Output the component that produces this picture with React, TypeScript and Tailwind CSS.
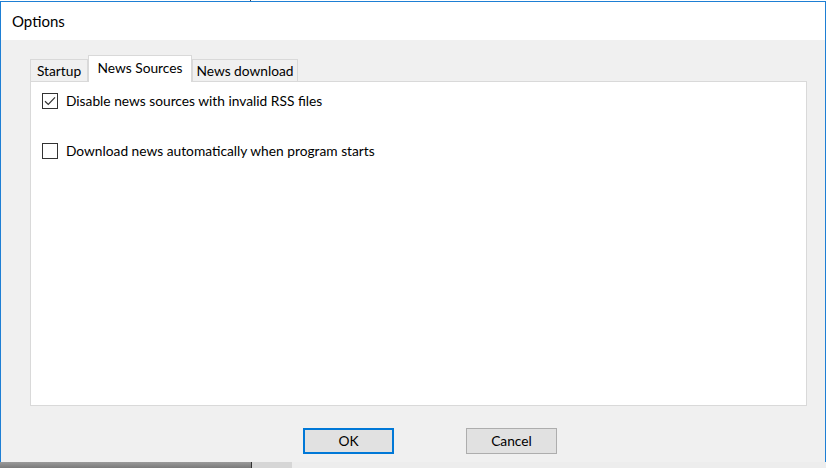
import { useState } from 'react';

const tabs = [
  { name: 'Startup', width: 'w-[58px]' },
  { name: 'News Sources', width: 'w-[104px]' },
  { name: 'News download', width: 'w-[106px]' },
] as const;

type TabName = (typeof tabs)[number]['name'];

function CheckBox({ checked, onChange, label }: { checked: boolean; onChange: () => void; label: string }) {
  return (
    <label className="flex items-center gap-[8px] cursor-default select-none" onClick={onChange}>
      <span className="w-[16px] h-[16px] border border-[#333333] bg-white flex items-center justify-center">
        {checked && (
          <svg width="12" height="10" viewBox="0 0 12 10" fill="none">
            <path d="M1 5.2 L4.3 8.4 L11 1.4" stroke="#333333" strokeWidth="1.2" />
          </svg>
        )}
      </span>
      <span className="text-[13.75px] leading-[18px] text-black">{label}</span>
    </label>
  );
}

export default function App() {
  const [activeTab, setActiveTab] = useState<TabName>('News Sources');
  const [disableInvalid, setDisableInvalid] = useState(true);
  const [autoDownload, setAutoDownload] = useState(false);

  return (
    <div
      className="w-[826px] h-[468px] flex flex-col bg-white overflow-hidden"
      style={{ fontFamily: 'Lato, "Noto Sans", sans-serif' }}
    >
      {/* window behind, top edge */}
      <div className="h-px flex">
        <div className="w-[250px] bg-white" />
        <div className="w-px bg-[#444444]" />
        <div className="flex-1 bg-white" />
      </div>

      {/* dialog */}
      <div className="flex-1 flex flex-col border-x border-t border-[#1e7fd4]">
        {/* title bar */}
        <div className="h-[38px] bg-white flex items-center pl-[11px]">
          <span className="text-[15px] text-black">Options</span>
        </div>

        {/* client area */}
        <div className="flex-1 bg-[#f0f0f0] flex flex-col pt-[15px]">
          {/* tabs */}
          <div className="flex items-end h-[26px] ml-[29px] relative z-10">
            {tabs.map((t) => {
              const selected = activeTab === t.name;
              return (
                <button
                  key={t.name}
                  type="button"
                  onClick={() => setActiveTab(t.name)}
                  className={`${t.width} flex justify-center border border-b-0 border-[#d9d9d9] text-[13.75px] text-black leading-none ${
                    selected ? 'h-[27px] -mb-px bg-white items-start pt-[5px]' : 'h-[22px] bg-[#f0f0f0] items-center pt-px'
                  }`}
                >
                  {t.name}
                </button>
              );
            })}
          </div>

          {/* tab page */}
          <div className="ml-[29px] w-[777px] h-[325px] bg-white border border-[#d9d9d9] pt-[10px] pl-[11px] flex flex-col gap-[32px]">
            {activeTab === 'News Sources' && (
              <>
                <CheckBox
                  checked={disableInvalid}
                  onChange={() => setDisableInvalid((v) => !v)}
                  label="Disable news sources with invalid RSS files"
                />
                <CheckBox
                  checked={autoDownload}
                  onChange={() => setAutoDownload((v) => !v)}
                  label="Download news automatically when program starts"
                />
              </>
            )}
          </div>

          {/* buttons */}
          <div className="flex mt-[22px] pl-[302px] gap-[72px]">
            <button
              type="button"
              className="w-[91px] h-[26px] bg-[#e1e1e1] border-2 border-[#0078d7] text-[13.75px] text-black leading-none"
            >
              OK
            </button>
            <button
              type="button"
              className="w-[91px] h-[26px] bg-[#e1e1e1] border border-[#adadad] text-[13.75px] text-black leading-none"
            >
              Cancel
            </button>
          </div>
        </div>
      </div>

      {/* window behind, bottom edge */}
      <div className="h-[6px] flex">
        <div className="w-[251px] bg-gradient-to-b from-[#9a9a9a] to-[#7a7a7a]" />
        <div className="w-px bg-[#333333]" />
        <div className="w-[40px] bg-[#d6d6d6]" />
        <div className="flex-1 bg-[#ededed]" />
      </div>
    </div>
  );
}
